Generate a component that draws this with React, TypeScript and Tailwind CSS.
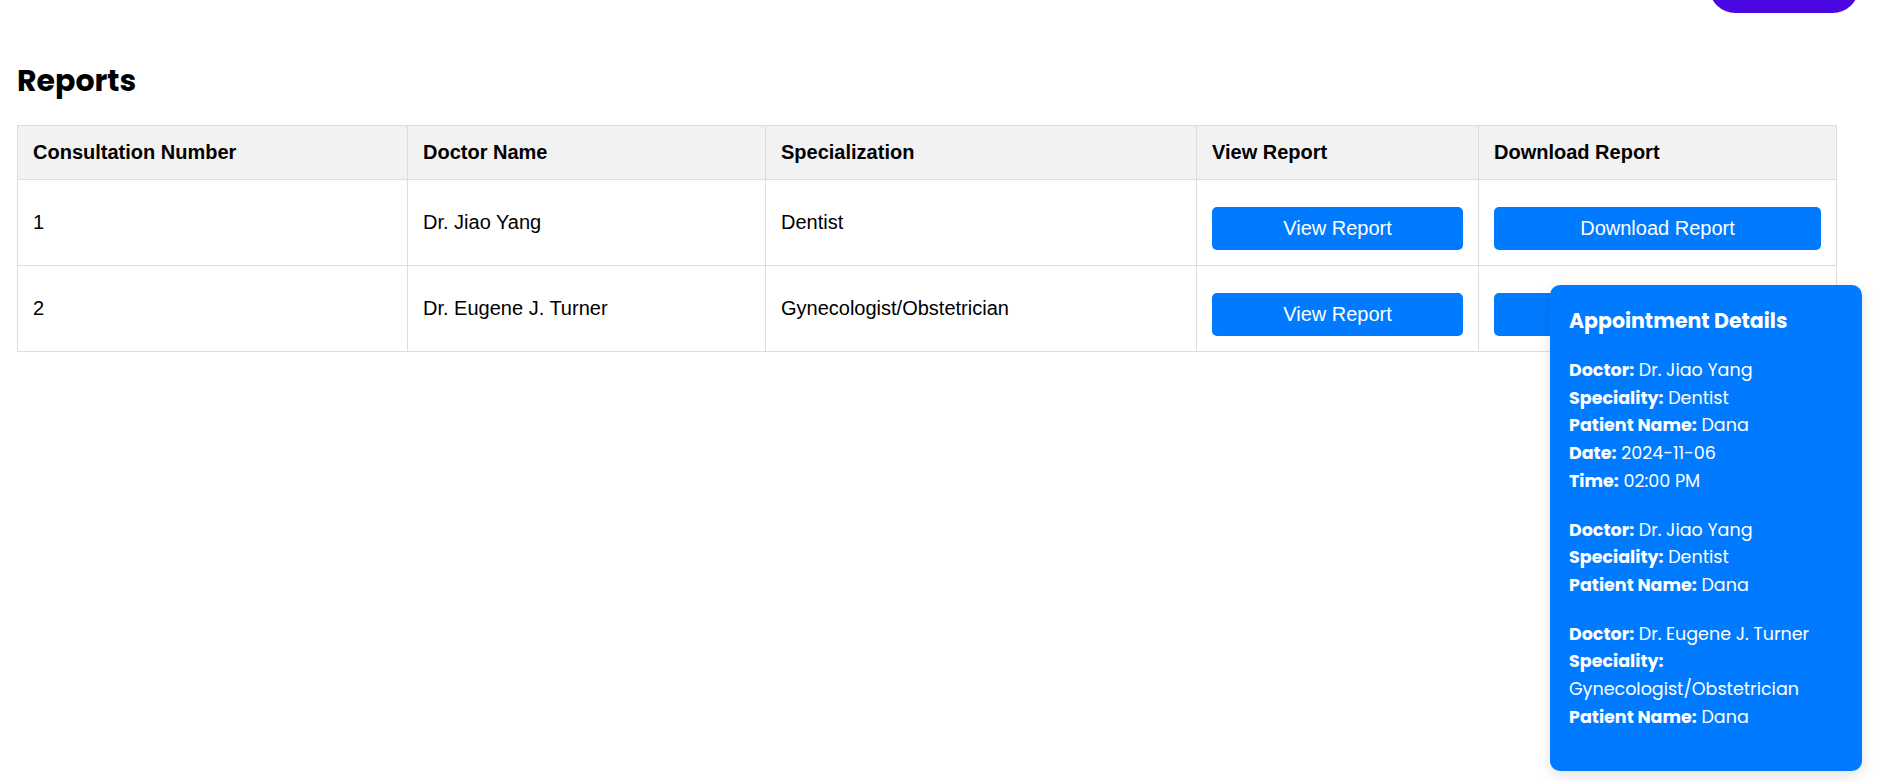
import React from "react";

const rows = [
  { n: "1", doctor: "Dr. Jiao Yang", spec: "Dentist" },
  { n: "2", doctor: "Dr. Eugene J. Turner", spec: "Gynecologist/Obstetrician" },
];

function Line({ label, value }: { label: string; value: string }) {
  return (
    <div>
      <span className="font-bold">{label}</span> {value}
    </div>
  );
}

export default function App() {
  return (
    <div className="relative min-h-[782px] w-full bg-white overflow-hidden">
      {/* top nav remnant */}
      <div className="flex h-[13px] justify-end pr-[28px]">
        <div className="mt-[-40px] h-[53px] w-[150px] rounded-[27px] bg-[#4b07e2]" />
      </div>

      <div className="pl-[17px]">
        <h2
          className="mt-[50px] text-[30px] leading-[36px] font-bold text-black"
          style={{ fontFamily: "Poppins, Inter, sans-serif" }}
        >
          Reports
        </h2>

        <table
          className="mt-[26px] w-[1819px] table-fixed border-collapse text-[20px] text-black"
          style={{ fontFamily: '"Liberation Sans", Arial, sans-serif' }}
        >
          <colgroup>
            <col className="w-[390px]" />
            <col className="w-[358px]" />
            <col className="w-[431px]" />
            <col className="w-[282px]" />
            <col className="w-[358px]" />
          </colgroup>
          <thead>
            <tr className="h-[54px] bg-[#f2f2f2]">
              {["Consultation Number", "Doctor Name", "Specialization", "View Report", "Download Report"].map((h) => (
                <th
                  key={h}
                  className="border border-[#dddddd] px-[15px] text-left align-middle font-bold leading-[23px]"
                >
                  {h}
                </th>
              ))}
            </tr>
          </thead>
          <tbody>
            {rows.map((r) => (
              <tr key={r.n}>
                <td className="border border-[#dddddd] px-[15px] py-[15px] align-middle leading-[23px]">{r.n}</td>
                <td className="border border-[#dddddd] px-[15px] py-[15px] align-middle leading-[23px]">{r.doctor}</td>
                <td className="border border-[#dddddd] px-[15px] py-[15px] align-middle leading-[23px]">{r.spec}</td>
                <td className="border border-[#dddddd] px-[15px] py-[15px] align-middle">
                  <button className="mt-[12px] flex h-[43px] w-full items-center justify-center rounded-[5px] bg-[#007bff] text-[20px] leading-[23px] text-white">
                    View Report
                  </button>
                </td>
                <td className="border border-[#dddddd] px-[15px] py-[15px] align-middle">
                  <button className="mt-[12px] flex h-[43px] w-full items-center justify-center rounded-[5px] bg-[#007bff] text-[20px] leading-[23px] text-white">
                    Download Report
                  </button>
                </td>
              </tr>
            ))}
          </tbody>
        </table>
      </div>

      {/* appointment details popup */}
      <div
        className="absolute left-[1550px] top-[285px] h-[486px] w-[312px] rounded-[10px] bg-[#007bff] px-[19px] pt-[22px] text-white shadow-[0_4px_14px_rgba(0,0,0,0.12)]"
        style={{ fontFamily: "Poppins, Inter, sans-serif" }}
      >
        <h3 className="text-[20.5px] leading-[28px] font-bold">Appointment Details</h3>
        <div className="mt-[22px] flex flex-col gap-[21px] text-[17.5px] leading-[27.7px]">
          <div>
            <Line label="Doctor:" value="Dr. Jiao Yang" />
            <Line label="Speciality:" value="Dentist" />
            <Line label="Patient Name:" value="Dana" />
            <Line label="Date:" value="2024-11-06" />
            <Line label="Time:" value="02:00 PM" />
          </div>
          <div>
            <Line label="Doctor:" value="Dr. Jiao Yang" />
            <Line label="Speciality:" value="Dentist" />
            <Line label="Patient Name:" value="Dana" />
          </div>
          <div>
            <Line label="Doctor:" value="Dr. Eugene J. Turner" />
            <Line label="Speciality:" value="Gynecologist/Obstetrician" />
            <Line label="Patient Name:" value="Dana" />
          </div>
        </div>
      </div>
    </div>
  );
}
